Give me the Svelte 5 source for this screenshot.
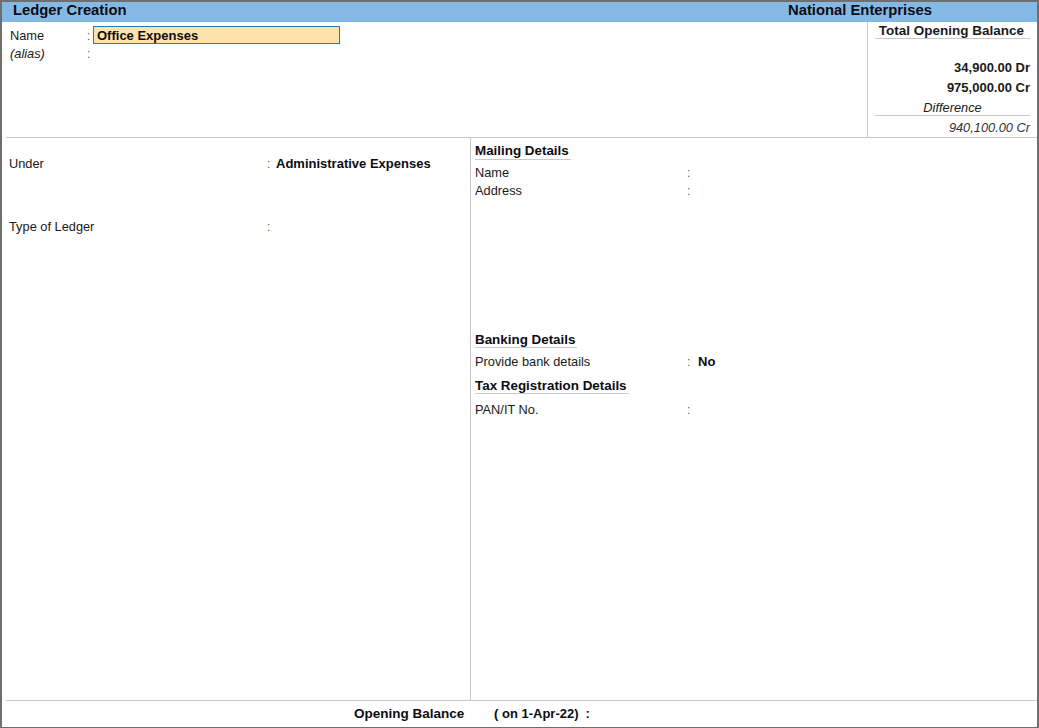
<script>
	const mailing = ['Name', 'Address'];
	const totals = [
		{ text: '34,900.00 Dr' },
		{ text: '975,000.00 Cr' }
	];
</script>

<div class="screen">
	<header class="titlebar">
		<span class="title">Ledger Creation</span>
		<span class="company">National Enterprises</span>
	</header>

	<section class="top">
		<div class="name-block">
			<div class="row name-row">
				<span class="label name-label">Name</span>
				<span class="colon">:</span>
				<div class="name-input">Office Expenses</div>
			</div>
			<div class="row alias-row">
				<span class="label name-label"><em>(alias)</em></span>
				<span class="colon">:</span>
			</div>
		</div>
		<aside class="totals">
			<div class="totals-head">Total Opening Balance</div>
			{#each totals as t}
				<div class="amount">{t.text}</div>
			{/each}
			<div class="diff-head">Difference</div>
			<div class="diff">940,100.00 Cr</div>
		</aside>
	</section>

	<main class="body">
		<div class="left">
			<div class="row under-row">
				<span class="label left-label">Under</span>
				<span class="colon">:</span>
				<strong class="value">Administrative Expenses</strong>
			</div>
			<div class="row type-row">
				<span class="label left-label">Type of Ledger</span>
				<span class="colon">:</span>
			</div>
		</div>
		<div class="right">
			<h2 class="section mailing-head">Mailing Details</h2>
			{#each mailing as m}
				<div class="row detail">
					<span class="label right-label">{m}</span>
					<span class="colon">:</span>
				</div>
			{/each}
			<h2 class="section banking-head">Banking Details</h2>
			<div class="row detail">
				<span class="label right-label">Provide bank details</span>
				<span class="colon">:</span>
				<strong class="value">No</strong>
			</div>
			<h2 class="section tax-head">Tax Registration Details</h2>
			<div class="row detail pan">
				<span class="label right-label">PAN/IT No.</span>
				<span class="colon">:</span>
			</div>
		</div>
	</main>

	<footer class="footer">
		<span class="open-label">Opening Balance</span>
		<span class="open-date">( on 1-Apr-22)</span>
		<span class="open-colon">:</span>
	</footer>
</div>

<style>
	:global(body) {
		margin: 0;
		background: #fff;
	}

	.screen {
		box-sizing: border-box;
		width: 1039px;
		height: 728px;
		display: flex;
		flex-direction: column;
		border: 2px solid #6f6f6f;
		border-bottom-width: 1px;
		font-family: 'Liberation Sans', Arial, sans-serif;
		font-size: 12.8px;
		color: #1a1a1a;
		background: #fff;
	}

	.titlebar {
		height: 20px;
		flex: none;
		display: flex;
		background: #85b9e5;
		font-size: 14.8px;
		font-weight: bold;
		line-height: 17px;
		color: #0c0c14;
		padding-left: 11px;
	}

	.title {
		width: 775px;
	}

	.top {
		height: 115px;
		flex: none;
		display: flex;
		justify-content: space-between;
		margin-left: 4px;
		border-bottom: 1px solid #c8c8c8;
	}

	.name-block {
		padding: 4px 0 0 4px;
	}

	.row {
		display: flex;
		align-items: center;
	}

	.label {
		color: #1a1a1a;
	}

	.colon {
		color: #7a5c1e;
		width: 6px;
		font-size: 12px;
		margin-top: 1px;
	}

	.name-label {
		width: 77px;
	}

	.name-row {
		height: 18px;
	}

	.alias-row {
		height: 17px;
		margin-top: 1px;
	}

	.name-input {
		box-sizing: border-box;
		width: 247px;
		height: 18px;
		padding-left: 3px;
		border: 1px solid #1b7fb8;
		background: #fee2ac;
		font-size: 13px;
		font-weight: bold;
		line-height: 17px;
		color: #0c0c14;
	}

	.totals {
		box-sizing: border-box;
		width: 170px;
		padding: 0 7px 0 7px;
		border-left: 1px solid #c8c8c8;
		display: flex;
		flex-direction: column;
	}

	.totals-head {
		height: 16px;
		margin-top: 1px;
		border-bottom: 1px solid #c8c8c8;
		text-align: center;
		font-size: 13.5px;
		font-weight: bold;
		line-height: 15px;
		margin-bottom: 19px;
		padding-right: 2px;
	}

	.amount {
		height: 20px;
		text-align: right;
		font-size: 13px;
		font-weight: bold;
		line-height: 20px;
		white-space: nowrap;
	}

	.diff-head {
		height: 17px;
		line-height: 20px;
		border-bottom: 1px solid #c8c8c8;
		text-align: center;
		font-style: italic;
	}

	.diff {
		text-align: right;
		font-style: italic;
		line-height: 24px;
		color: #333;
	}

	.body {
		flex: 1;
		display: flex;
		min-height: 0;
	}

	.left {
		box-sizing: border-box;
		width: 469px;
		flex: none;
		padding: 16px 0 0 7px;
		border-right: 1px solid #c8c8c8;
	}

	.left-label {
		width: 258px;
	}

	.under-row {
		height: 18px;
	}

	.under-row .value {
		margin-left: 3px;
	}

	.type-row {
		height: 18px;
		margin-top: 45px;
	}

	.value {
		font-size: 13px;
		font-weight: bold;
		color: #0c0c14;
	}

	.right {
		flex: 1;
		padding: 5px 0 0 4px;
	}

	.section {
		width: fit-content;
		height: 16px;
		margin: 0;
		padding: 0 2px 0 0;
		font-size: 13.4px;
		font-weight: bold;
		line-height: 16px;
		border-bottom: 1px solid #c8c8c8;
		color: #0c0c14;
	}

	.right-label {
		width: 212px;
	}

	.detail {
		height: 18px;
	}

	.mailing-head + .detail {
		margin-top: 3px;
	}

	.banking-head {
		margin-top: 132px;
		line-height: 18px;
	}

	.banking-head + .detail {
		margin-top: 4px;
	}

	.detail strong {
		margin-left: 5px;
	}

	.tax-head {
		margin-top: 7px;
		line-height: 18px;
	}

	.pan {
		margin-top: 6px;
	}

	.footer {
		box-sizing: border-box;
		height: 27px;
		flex: none;
		display: flex;
		align-items: center;
		margin-left: 4px;
		padding: 0 0 1px 348px;
		border-top: 1px solid #c8c8c8;
		font-size: 13px;
		font-weight: bold;
		color: #0c0c14;
	}

	.open-label {
		width: 140px;
		font-size: 13.5px;
	}

	.open-colon {
		margin-left: 7px;
	}
</style>
